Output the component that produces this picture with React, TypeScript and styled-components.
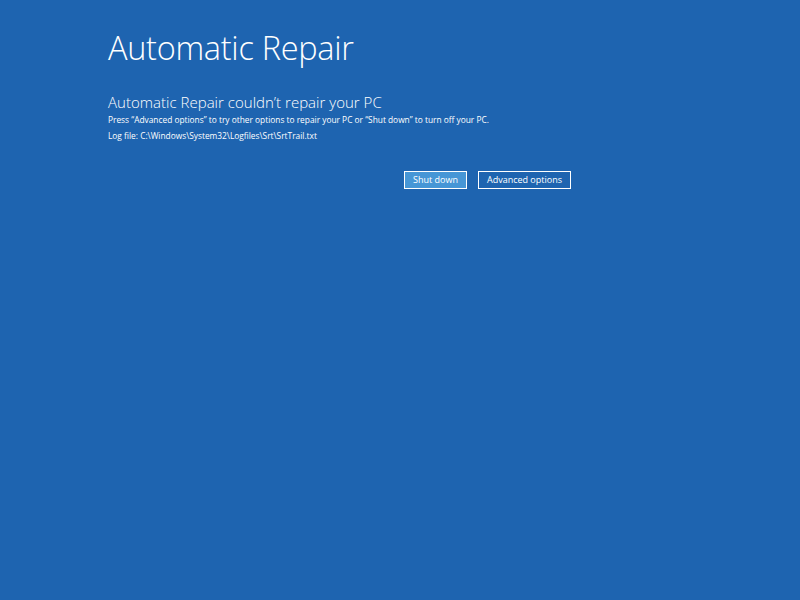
import React from "react";
import styled, { createGlobalStyle } from "styled-components";

const GlobalStyle = createGlobalStyle`
  html, body {
    margin: 0;
    padding: 0;
    background: #1e64b0;
  }
`;

const Screen = styled.div`
  width: 800px;
  height: 600px;
  background: #1e64b0;
  color: #ffffff;
  font-family: "Open Sans", "Noto Sans", sans-serif;
  box-sizing: border-box;
  padding: 24px 0 0 108px;
`;

const Title = styled.h1`
  margin: 0;
  font-size: 32.5px;
  font-weight: 300;
  line-height: 48px;
  letter-spacing: -0.3px;
`;

const Subtitle = styled.h2`
  margin: 20px 0 0 0;
  font-size: 15px;
  font-weight: 300;
  line-height: 20px;
  letter-spacing: 0.02px;
`;

const Line = styled.p`
  margin: 0;
  font-size: 8.35px;
  line-height: 16px;
`;

const Actions = styled.div`
  display: flex;
  gap: 11px;
  margin: 27px 0 0 296px;
`;

const Button = styled.button<{ $primary?: boolean }>`
  height: 18px;
  padding: 0 8px;
  border: 1px solid #ffffff;
  background: ${(p) => (p.$primary ? "#4696d6" : "#1e64b0")};
  color: #ffffff;
  font-family: "Open Sans", "Noto Sans", sans-serif;
  font-size: 9px;
  line-height: 16px;
`;

const App: React.FC = () => {
  return (
    <>
      <GlobalStyle />
      <Screen>
        <Title>Automatic Repair</Title>
        <Subtitle>Automatic Repair couldn’t repair your PC</Subtitle>
        <Line>
          Press “Advanced options” to try other options to repair your PC or “Shut down” to turn off your PC.
        </Line>
        <Line>Log file: C:\Windows\System32\Logfiles\Srt\SrtTrail.txt</Line>
        <Actions>
          <Button $primary>Shut down</Button>
          <Button>Advanced options</Button>
        </Actions>
      </Screen>
    </>
  );
};

export default App;
